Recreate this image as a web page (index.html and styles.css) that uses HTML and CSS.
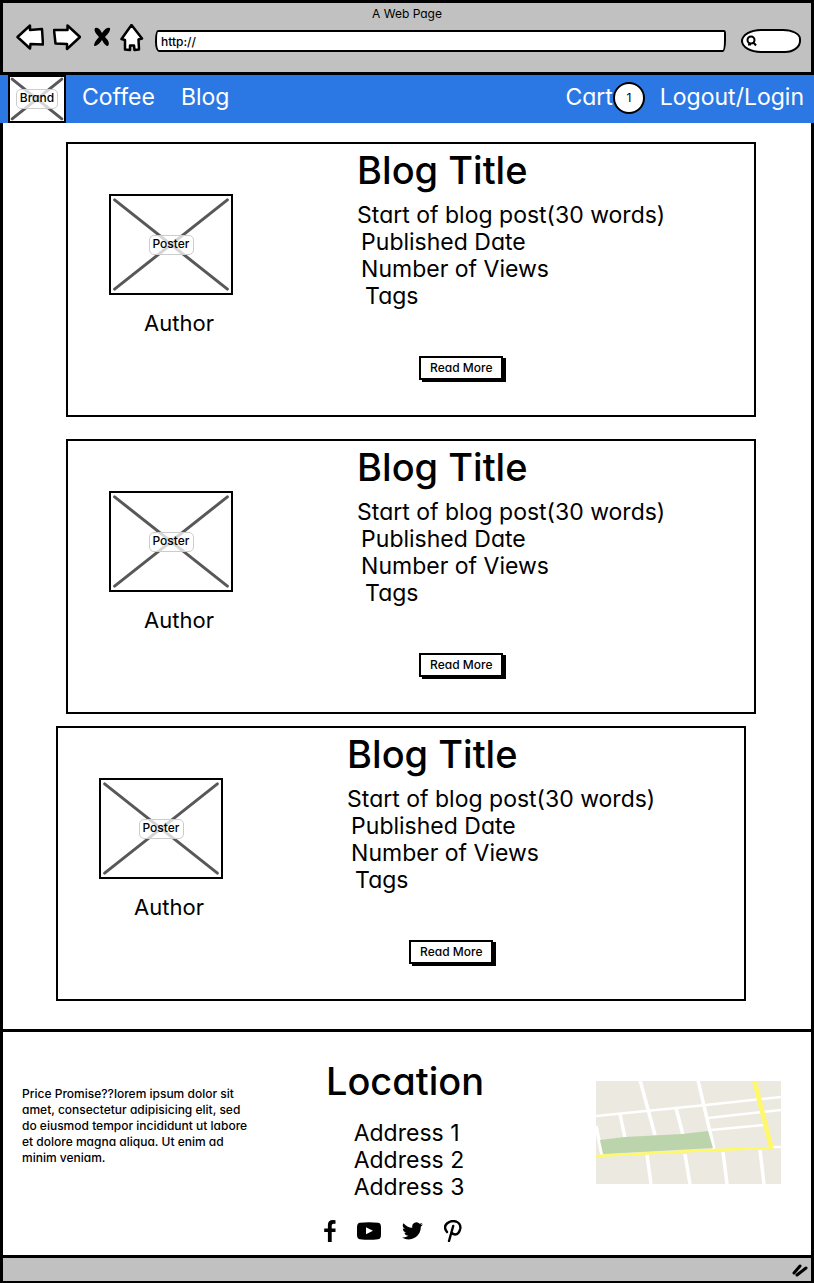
FILE: index.html
```html
<!DOCTYPE html>
<html lang="en">
<head>
<meta charset="utf-8">
<meta name="viewport" content="width=device-width, initial-scale=1">
<title>A Web Page</title>
<link rel="stylesheet" href="styles.css">
</head>
<body>
<div class="frame">
  <header class="chrome">
    <div class="chrome-title">A Web Page</div>
    <div class="chrome-bar">
      <div class="chrome-buttons">
        <button class="icon-button" type="button" aria-label="Back">
          <svg width="28" height="28" viewBox="0 0 28 28"><path class="sketch" d="M1.500 13 14 1.500 14 6 26 5 27 20.500 14.500 20 14 24.500Z"/></svg>
        </button>
        <button class="icon-button" type="button" aria-label="Forward">
          <svg width="28" height="28" viewBox="0 0 28 28"><path class="sketch" d="M1 6 14.500 6 14.500 1.500 27 13 14 25 14 20 2.500 19.500Z"/></svg>
        </button>
        <button class="icon-button icon-button-close" type="button" aria-label="Stop">
          <svg width="18" height="22" viewBox="0 0 18 22"><path d="M2 1Q6 0 9 6 13 0 17 1 18 4 12 10 18 16 15 19 12 19 9 13 5 19 1 19 1 15 6 10 0 4 2 1Z"/></svg>
        </button>
        <button class="icon-button" type="button" aria-label="Home">
          <svg width="24" height="28" viewBox="0 0 24 28"><path class="sketch" d="M11.500 1 22 14.500 18.500 15.500 19 25.500 14.500 26 14 21.500 10 21.500 10 26 5 25.500 5 16 1.500 15Z"/></svg>
        </button>
      </div>
      <input class="address" type="text" value="http://" aria-label="Address">
      <div class="search">
        <svg width="12" height="12" viewBox="0 0 12 12"><circle class="lens" cx="5" cy="5" r="3.500"/><path class="lens" d="M7 7 10 10.500M2 9.500H5"/></svg>
        <input class="search-input" type="search" aria-label="Search">
      </div>
    </div>
  </header>

  <nav class="nav">
    <a class="brand placeholder" href="#">
      <svg class="cross" viewBox="0 0 100 100" preserveAspectRatio="none"><path d="M4 5 96 95M96 5 4 95"/></svg>
      <span class="tag">Brand</span>
    </a>
    <a class="nav-link" href="#">Coffee</a>
    <a class="nav-link" href="#">Blog</a>
    <a class="nav-link cart" href="#">Cart<span class="count">1</span></a>
    <a class="nav-link" href="#">Logout/Login</a>
  </nav>

  <main class="posts">
    <article class="card">
      <div class="author">
        <div class="poster placeholder">
          <svg class="cross" viewBox="0 0 100 100" preserveAspectRatio="none"><path d="M3 4 97 96M97 4 3 96"/></svg>
          <span class="tag">Poster</span>
        </div>
        <p class="author-name">Author</p>
      </div>
      <div class="post">
        <h2 class="heading">Blog Title</h2>
        <p>Start of blog post(30 words)</p>
        <ul class="meta"><li>Published Date</li><li>Number of Views</li><li class="tags">Tags</li></ul>
        <button class="read-more" type="button">Read More</button>
      </div>
    </article>
    <article class="card">
      <div class="author">
        <div class="poster placeholder">
          <svg class="cross" viewBox="0 0 100 100" preserveAspectRatio="none"><path d="M3 4 97 96M97 4 3 96"/></svg>
          <span class="tag">Poster</span>
        </div>
        <p class="author-name">Author</p>
      </div>
      <div class="post">
        <h2 class="heading">Blog Title</h2>
        <p>Start of blog post(30 words)</p>
        <ul class="meta"><li>Published Date</li><li>Number of Views</li><li class="tags">Tags</li></ul>
        <button class="read-more" type="button">Read More</button>
      </div>
    </article>
    <article class="card card-last">
      <div class="author">
        <div class="poster placeholder">
          <svg class="cross" viewBox="0 0 100 100" preserveAspectRatio="none"><path d="M3 4 97 96M97 4 3 96"/></svg>
          <span class="tag">Poster</span>
        </div>
        <p class="author-name">Author</p>
      </div>
      <div class="post">
        <h2 class="heading">Blog Title</h2>
        <p>Start of blog post(30 words)</p>
        <ul class="meta"><li>Published Date</li><li>Number of Views</li><li class="tags">Tags</li></ul>
        <button class="read-more" type="button">Read More</button>
      </div>
    </article>
  </main>

  <footer class="footer">
    <p class="promise">Price Promise??lorem ipsum dolor sit amet, consectetur adipisicing elit, sed do eiusmod tempor incididunt ut labore et dolore magna aliqua. Ut enim ad minim veniam.</p>
    <section class="location">
      <h2 class="heading">Location</h2>
      <address class="addresses">
        <div>Address 1</div>
        <div>Address 2</div>
        <div>Address 3</div>
      </address>
      <div class="social">
        <a href="#" aria-label="Facebook"><svg width="12" height="22" viewBox="0 0 12 22"><path d="M11.500.2V3.700H9.500Q7.700 3.700 7.700 5.400V8.500H11.500V12H7.700V22H3.900V12H.2V8.500H3.900V5Q3.900.2 9 .1Z"/></svg></a>
        <a href="#" aria-label="YouTube"><svg width="24" height="18" viewBox="0 0 24 18"><path fill-rule="evenodd" d="M3 .7Q12-.4 21 .7 23.700 1 23.900 4 24.200 9 23.900 14 23.700 17 21 17.300 12 18.300 3 17.300.4 17 .1 14-.2 9 .1 4 .4 1 3 .7ZM9 5.300V12.300L16 8.800Z"/></svg></a>
        <a href="#" aria-label="Twitter"><svg width="21" height="18" viewBox="0 0 24 20"><path d="M24 2.400a10 10 0 0 1-2.800.8A5 5 0 0 0 23.300.5a10 10 0 0 1-3.100 1.200 4.900 4.900 0 0 0-8.400 4.500A14 14 0 0 1 1.700 1a4.900 4.900 0 0 0 1.500 6.600 5 5 0 0 1-2.200-.6 4.900 4.900 0 0 0 3.900 4.900 5 5 0 0 1-2.200.1 4.900 4.900 0 0 0 4.600 3.400A10 10 0 0 1 0 17.400a14 14 0 0 0 21.500-12.400A10 10 0 0 0 24 2.400Z"/></svg></a>
        <a href="#" aria-label="Pinterest"><svg width="18" height="22" viewBox="0 0 18 22"><path class="pin" d="M3 12Q-1 7 3 3.500 7 0 12 1.500 17 3.500 16.300 8.500 15 14.500 11 14.500 8.500 14.300 7.600 12.300M9.200 6 5 21"/></svg></a>
      </div>
    </section>
    <svg class="map" viewBox="0 0 185 103" role="img" aria-label="Map">
      <path fill="#ece9e1" d="M0 0H185V103H0Z"/>
      <g fill="none" stroke="#fff" stroke-width="3.500">
        <path d="M44-1 59 54M102-1 118 68M24 33 29 57M80 27 87 54M0 45 6 74M51 74 55 103M89 73 94 103M127 71 131 103M164 69 168 103"/>
        <path stroke-width="2.500" d="M0 35 110 24 185 16M112 37 185 29M115 49 168 44M176 66H185"/>
      </g>
      <path fill="#bbd4ab" d="M4 59 29 56 86 53 112 50 117 67 7 73Z"/>
      <path fill="none" stroke="#fff96a" stroke-width="2.500" d="M0 75 116 69 176 67"/>
      <path fill="#fff96a" d="M156 0H161L178 68 173 67Z"/>
    </svg>
  </footer>

  <div class="status">
    <svg width="16" height="14" viewBox="0 0 16 14"><path class="grip" d="M2 10 8 3M5 12 14 5"/></svg>
  </div>
</div>
</body>
</html>
```
FILE: styles.css
```css
* { box-sizing: border-box; }

body {
  margin: 0;
  background: #fff;
  color: #000;
  font-family: Inter, "Open Sans", sans-serif;
  font-size: 23px;
  line-height: 27px;
  font-feature-settings: "cv11";
}

h2, p, ul { margin: 0; padding: 0; font-weight: 400; }
a { color: inherit; text-decoration: none; }
svg { display: block; flex: none; }

button, input {
  font: inherit;
  font-feature-settings: inherit;
  color: inherit;
}

.frame {
  display: flex;
  flex-direction: column;
  min-height: 100vh;
  border: 3px solid #000;
}

.chrome {
  height: 72px;
  background: #c1c1c1;
  border-bottom: 3px solid #000;
}

.chrome-title {
  padding-top: 2px;
  font-size: 12px;
  line-height: 18px;
  text-align: center;
}

.chrome-bar {
  display: flex;
  align-items: center;
  gap: 11px;
  padding: 0 10px 0 13px;
}

.chrome-buttons {
  display: flex;
  align-items: center;
  gap: 9px;
}

.icon-button {
  padding: 0;
  border: 0;
  background: none;
}

.icon-button-close { margin-left: 3px; }

.sketch {
  fill: #fff;
  stroke: #000;
  stroke-width: 2.5;
  stroke-linejoin: round;
}

.address {
  flex: 1;
  min-width: 0;
  height: 22px;
  margin-top: 6px;
  padding: 0 4px;
  border: 2px solid #000;
  border-radius: 3px 2px 3px 4px / 10px 4px 12px 10px;
  background: #fff;
  font-size: 12px;
  font-weight: 500;
}

.search {
  display: flex;
  align-items: center;
  width: 60px;
  height: 24px;
  margin: 6px 0 0 4px;
  padding-left: 3px;
  border: 2px solid #000;
  border-radius: 20px 18px 16px 20px / 12px 10px 12px 12px;
  background: #fff;
}

.search-input {
  width: 36px;
  height: 16px;
  padding: 0;
  border: 0;
  outline: 0;
  background: none;
  font-size: 12px;
}

.lens { fill: none; stroke: #000; stroke-width: 2; }

.nav {
  display: flex;
  align-items: center;
  height: 48px;
  margin: 0 -3px;
  padding: 0 10px 0 8px;
  background: #2b78e4;
  color: #fff;
}

.nav-link { margin-left: 16px; padding-bottom: 3px; }
.nav-link + .nav-link { margin-left: 26px; }
.nav-link.cart { display: flex; align-items: center; margin-left: auto; }
.nav-link.cart + .nav-link { margin-left: 15px; }

.count {
  display: grid;
  place-items: center;
  width: 32px;
  height: 32px;
  border: 2px solid #000;
  border-radius: 50%;
  background: #fff;
  color: #000;
  font-size: 12px;
}

.placeholder {
  display: grid;
  place-items: center;
  border: 2px solid #000;
  background: #fff;
  color: #000;
}

.placeholder > * { grid-area: 1 / 1; }
.brand { width: 58px; height: 48px; }
.poster { width: 124px; height: 101px; }

.cross {
  width: 100%;
  height: 100%;
  min-height: 0;
  fill: none;
  stroke: #58585a;
  stroke-width: 3px;
  stroke-linecap: round;
}

.cross path { vector-effect: non-scaling-stroke; }

.tag {
  position: relative;
  padding: 0 3px 2px;
  border: 1px solid #ccc;
  border-radius: 5px;
  background: rgba(255, 255, 255, 0.75);
  font-size: 12px;
  font-weight: 500;
  line-height: 16px;
}

.posts {
  display: flex;
  flex-direction: column;
  gap: 22px;
  padding: 19px 55px 28px 63px;
}

.card {
  display: grid;
  grid-template-columns: 42% 1fr;
  min-height: 275px;
  border: 2px solid #000;
}

.card-last { margin: -10px 10px 0 -10px; }

.author {
  display: flex;
  flex-direction: column;
  align-items: center;
  justify-self: start;
  gap: 15px;
  padding: 50px 0 0 41px;
}

.author-name { padding-left: 16px; font-size: 22px; }

.post {
  display: flex;
  flex-direction: column;
  align-items: flex-start;
  padding-left: 1px;
}

.heading {
  font-size: 38px;
  font-weight: 500;
  line-height: 48px;
}

.post .heading { margin: 2px 0 8px; }
.meta { padding-left: 4px; list-style: none; }
.tags { padding-left: 4px; }

.read-more {
  height: 24px;
  margin: 46px 0 0 62px;
  padding: 0 9px;
  border: 2px solid #000;
  background: #fff;
  box-shadow: 3px 2px 0 #000;
  font-size: 12px;
  font-weight: 500;
  line-height: 18px;
}

.footer {
  display: grid;
  grid-template-columns: 232px 1fr 185px;
  flex: 1;
  padding: 0 30px 0 19px;
  border-top: 3px solid #000;
}

.promise {
  padding-top: 54px;
  font-size: 12px;
  font-weight: 500;
  line-height: 16px;
}

.location {
  display: flex;
  flex-direction: column;
  align-items: center;
  padding: 25px 0 13px;
  margin-right: 40px;
}

.addresses { padding: 15px 0 0 8px; font-style: normal; }

.social {
  display: flex;
  align-items: center;
  gap: 21px;
  padding-top: 19px;
  margin-right: 24px;
}

.pin { fill: none; stroke: #000; stroke-width: 2.4; stroke-linecap: round; }

.map {
  width: 100%;
  height: auto;
  margin-top: 49px;
}

.status {
  display: flex;
  align-items: center;
  justify-content: flex-end;
  height: 26px;
  padding-right: 3px;
  border-top: 3px solid #000;
  background: #c1c1c1;
}

.grip { fill: none; stroke: #000; stroke-width: 3; stroke-linecap: round; }
```
